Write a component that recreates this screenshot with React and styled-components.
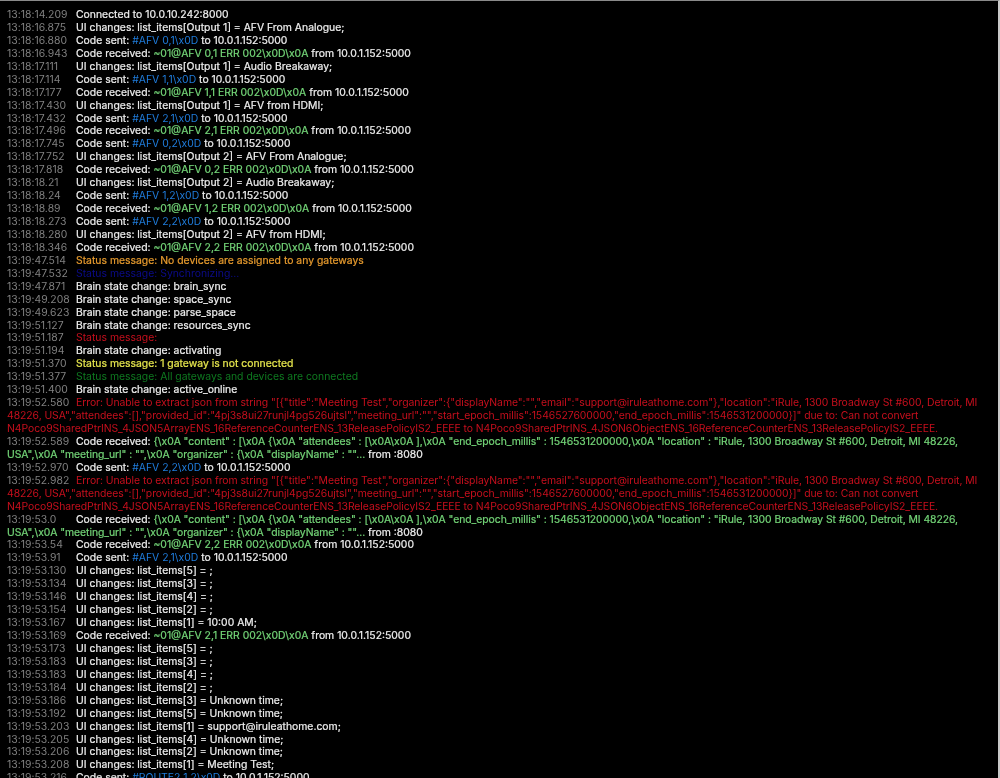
import React from "react";
import styled, { createGlobalStyle } from "styled-components";

const GlobalStyle = createGlobalStyle`
  html, body {
    margin: 0;
    padding: 0;
    height: 100%;
    background: #000;
    overflow: hidden;
  }
`;

const Window = styled.div`
  width: 1000px;
  height: 778px;
  box-sizing: border-box;
  overflow: hidden;
  background: #000;
  border-top: 1px solid #8a8a8a;
  border-right: 2px solid #c8c8c8;
  padding: 8px 0 0 7px;
  font-family: Inter, "Liberation Sans", Arial, sans-serif;
  font-size: 10.4px;
  line-height: 12.93px;
  filter: blur(0.3px);
`;

const Row = styled.div`
  white-space: pre;
  color: #f0f0f0;
  -webkit-text-stroke: 0.2px currentColor;
`;

const Time = styled.span`
  display: inline-block;
  width: 69px;
  color: #808080;
  letter-spacing: 0.02px;
  -webkit-text-stroke: 0;
`;

const COLORS = {
  sent: "#1f7cdc",
  recv: "#74d678",
  orange: "#e99c2e",
  navy: "#0b0b8a",
  red: "#c70f1d",
  yellow: "#e8e84e",
  green: "#0e7a20",
};

// the long json dumps run a little narrower than the short rows
const Tint = styled.span`
  color: ${(p) => COLORS[p.$kind]};
  letter-spacing: ${(p) => (p.$long ? "-0.055px" : "0")};
  -webkit-text-stroke: ${(p) => (p.$kind === "recv" || p.$kind === "yellow" || p.$kind === "orange" ? "0.2px" : "0")} currentColor;
`;

const HOST = "10.0.1.152:5000";

const ui = (t, what) => [t, `UI changes: list_items[${what};`];
const sent = (t, code) => [t, "Code sent: ", ["sent", `${code}\\x0D`], ` to ${HOST}`];
const recv = (t, args) => [
  t,
  "Code received: ",
  ["recv", `~01@AFV ${args} ERR 002\\x0D\\x0A`],
  ` from ${HOST}`,
];
const brain = (t, state) => [t, `Brain state change: ${state}`];

const jsonError = (t) => [
  t,
  [
    "red",
    `Error: Unable to extract json from string "[{"title":"Meeting Test","organizer":{"displayName":"","email":"support@iruleathome.com"},"location":"iRule, 1300 Broadway St #600, Detroit, MI
48226, USA","attendees":[],"provided_id":"4pj3s8ui27runjl4pg526ujtsl","meeting_url":"","start_epoch_millis":1546527600000,"end_epoch_millis":1546531200000}]" due to: Can not convert
N4Poco9SharedPtrINS_4JSON5ArrayENS_16ReferenceCounterENS_13ReleasePolicyIS2_EEEE to N4Poco9SharedPtrINS_4JSON6ObjectENS_16ReferenceCounterENS_13ReleasePolicyIS2_EEEE.`,
    true,
  ],
];

const jsonReceived = (t) => [
  t,
  "Code received: ",
  [
    "recv",
    `{\\x0A "content" : [\\x0A {\\x0A "attendees" : [\\x0A\\x0A ],\\x0A "end_epoch_millis" : 1546531200000,\\x0A "location" : "iRule, 1300 Broadway St #600, Detroit, MI 48226,
USA",\\x0A "meeting_url" : "",\\x0A "organizer" : {\\x0A "displayName" : ""...`,
    true,
  ],
  " from :8080",
];

const LOG = [
  ["13:18:14.209", "Connected to 10.0.10.242:8000"],
  ui("13:18:16.875", "Output 1] = AFV From Analogue"),
  sent("13:18:16.880", "#AFV 0,1"),
  recv("13:18:16.943", "0,1"),
  ui("13:18:17.111", "Output 1] = Audio Breakaway"),
  sent("13:18:17.114", "#AFV 1,1"),
  recv("13:18:17.177", "1,1"),
  ui("13:18:17.430", "Output 1] = AFV from HDMI"),
  sent("13:18:17.432", "#AFV 2,1"),
  recv("13:18:17.496", "2,1"),
  sent("13:18:17.745", "#AFV 0,2"),
  ui("13:18:17.752", "Output 2] = AFV From Analogue"),
  recv("13:18:17.818", "0,2"),
  ui("13:18:18.21", "Output 2] = Audio Breakaway"),
  sent("13:18:18.24", "#AFV 1,2"),
  recv("13:18:18.89", "1,2"),
  sent("13:18:18.273", "#AFV 2,2"),
  ui("13:18:18.280", "Output 2] = AFV from HDMI"),
  recv("13:18:18.346", "2,2"),
  ["13:19:47.514", ["orange", "Status message: No devices are assigned to any gateways"]],
  ["13:19:47.532", ["navy", "Status message: Synchronizing..."]],
  brain("13:19:47.871", "brain_sync"),
  brain("13:19:49.208", "space_sync"),
  brain("13:19:49.623", "parse_space"),
  brain("13:19:51.127", "resources_sync"),
  ["13:19:51.187", ["red", "Status message:"]],
  brain("13:19:51.194", "activating"),
  ["13:19:51.370", ["yellow", "Status message: 1 gateway is not connected"]],
  ["13:19:51.377", ["green", "Status message: All gateways and devices are connected"]],
  brain("13:19:51.400", "active_online"),
  jsonError("13:19:52.580"),
  jsonReceived("13:19:52.589"),
  sent("13:19:52.970", "#AFV 2,2"),
  jsonError("13:19:52.982"),
  jsonReceived("13:19:53.0"),
  recv("13:19:53.54", "2,2"),
  sent("13:19:53.91", "#AFV 2,1"),
  ui("13:19:53.130", "5] = "),
  ui("13:19:53.134", "3] = "),
  ui("13:19:53.146", "4] = "),
  ui("13:19:53.154", "2] = "),
  ui("13:19:53.167", "1] = 10:00 AM"),
  recv("13:19:53.169", "2,1"),
  ui("13:19:53.173", "5] = "),
  ui("13:19:53.183", "3] = "),
  ui("13:19:53.183", "4] = "),
  ui("13:19:53.184", "2] = "),
  ui("13:19:53.186", "3] = Unknown time"),
  ui("13:19:53.192", "5] = Unknown time"),
  ui("13:19:53.203", "1] = support@iruleathome.com"),
  ui("13:19:53.205", "4] = Unknown time"),
  ui("13:19:53.206", "2] = Unknown time"),
  ui("13:19:53.208", "1] = Meeting Test"),
  sent("13:19:53.216", "#ROUTE2 1,2"),
];

export default function App() {
  return (
    <>
      <GlobalStyle />
      <Window>
        {LOG.map(([time, ...parts], i) => (
          <Row key={i}>
            <Time>{time}</Time>
            {parts.map((part, j) =>
              typeof part === "string" ? (
                part
              ) : (
                <Tint key={j} $kind={part[0]} $long={part[2]}>
                  {part[1]}
                </Tint>
              ),
            )}
          </Row>
        ))}
      </Window>
    </>
  );
}
